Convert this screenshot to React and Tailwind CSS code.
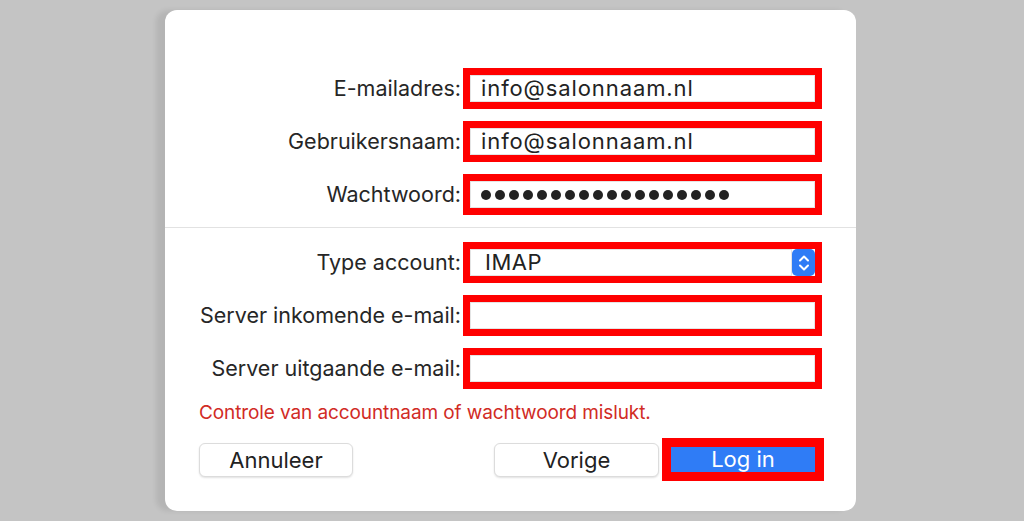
import { useState } from 'react';

const font = { fontFamily: 'Inter, "Noto Sans", sans-serif' };

function RedField({ children, select }) {
  return (
    <div className="w-[359px] h-[41px] border-[7px] border-[#ff0000] bg-white flex items-center">
      <div className="flex-1 h-full flex items-center px-[10px] text-[22px] tracking-[0.9px] text-[#222] border border-[#e4e4e4]">
        {children}
      </div>
      {select && (
        <div className="w-[23px] h-[27px] -my-[2px] rounded-[5px] bg-[#2f7cf6] flex items-center justify-center">
          <svg width="12" height="20" viewBox="0 0 12 20" fill="none" stroke="white" strokeWidth="2" strokeLinecap="round" strokeLinejoin="round">
            <path d="M2 7.5 L6 3.5 L10 7.5" />
            <path d="M2 12.5 L6 16.5 L10 12.5" />
          </svg>
        </div>
      )}
    </div>
  );
}

function Row({ label, children, select }) {
  return (
    <div className="flex items-center h-[41px]">
      <div className="w-[298px] pr-[2px] text-right text-[21.5px] text-[#262626]">{label}</div>
      <RedField select={select}>{children}</RedField>
    </div>
  );
}

function Dots() {
  return (
    <div className="flex gap-[4px]">
      {Array.from({ length: 18 }).map((_, i) => (
        <span key={i} className="w-[10px] h-[10px] rounded-full bg-[#222]" />
      ))}
    </div>
  );
}

export default function App() {
  const [type] = useState('IMAP');

  return (
    <div className="w-full h-[521px] bg-[#c4c4c4] overflow-hidden" style={font}>
      <div className="pl-[165px] pt-[10px]">
        <div className="w-[691px] h-[501px] bg-white rounded-[12px] shadow-[-9px_0_5px_rgba(0,0,0,0.08)] flex flex-col">
          <div className="pt-[58px] flex flex-col gap-[12px]">
            <Row label="E-mailadres:">info@salonnaam.nl</Row>
            <Row label="Gebruikersnaam:">info@salonnaam.nl</Row>
            <Row label="Wachtwoord:"><Dots /></Row>
          </div>

          <div className="mt-[12px] h-px bg-[#e2e2e2]" />

          <div className="mt-[14px] flex flex-col gap-[12px]">
            <Row label="Type account:" select>
              <span className="pl-[4px] tracking-[0.5px]">{type}</span>
            </Row>
            <Row label="Server inkomende e-mail:" />
            <Row label="Server uitgaande e-mail:" />
          </div>

          <div className="mt-[13px] pl-[34px] text-[19px] leading-[22px] tracking-[-0.1px] text-[#d12b25]">
            Controle van accountnaam of wachtwoord mislukt.
          </div>

          <div className="mt-[14px] pl-[34px] pr-[32px] flex items-center">
            <button className="w-[154px] h-[34px] rounded-[6px] bg-white border border-[#dcdcdc] shadow-[0_1px_2px_rgba(0,0,0,0.12)] text-[22px] text-[#222]">
              Annuleer
            </button>
            <div className="flex-1" />
            <button className="w-[165px] h-[34px] mr-[3px] rounded-[6px] bg-white border border-[#dcdcdc] shadow-[0_1px_2px_rgba(0,0,0,0.12)] text-[22px] text-[#222]">
              Vorige
            </button>
            <div className="w-[162px] h-[43px] border-[9px] border-[#ff0000] bg-[#2f7cf6] flex items-center justify-center text-[22px] text-white">
              Log in
            </div>
          </div>
        </div>
      </div>
    </div>
  );
}
